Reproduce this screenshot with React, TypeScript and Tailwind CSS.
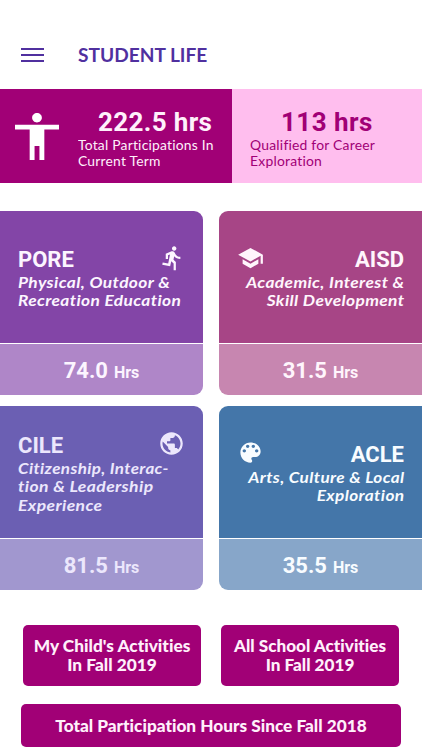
import { MdDirectionsRun, MdPublic, MdSchool } from "react-icons/md";
import type { ComponentType } from "react";

type Category = {
	code: string;
	lines: { text: string; scale: string }[];
	hours: string;
	Icon: ComponentType<{ className?: string }>;
	iconClass: string;
	topClass: string;
	bottomClass: string;
	textClass: string;
	right?: boolean;
};

function PaletteIcon({ className }: { className?: string }) {
	return (
		<svg viewBox="0 0 24 24" fill="currentColor" className={className}>
			<path d="M12 3c-4.97 0-9 4.03-9 9s4.03 9 9 9c.83 0 1.5-.67 1.5-1.5 0-.39-.15-.74-.39-1.01-.23-.26-.38-.61-.38-.99 0-.83.67-1.5 1.5-1.5H16c2.76 0 5-2.24 5-5 0-4.42-4.03-8-9-8zm-5.5 9c-.83 0-1.5-.67-1.5-1.5S5.67 9 6.5 9 8 9.67 8 10.5 7.33 12 6.5 12zm3-4C8.67 8 8 7.33 8 6.5S8.67 5 9.5 5s1.5.67 1.5 1.5S10.33 8 9.5 8zm5 0c-.83 0-1.5-.67-1.5-1.5S13.67 5 14.5 5s1.5.67 1.5 1.5S15.33 8 14.5 8zm3 4c-.83 0-1.5-.67-1.5-1.5S16.67 9 17.5 9s1.5.67 1.5 1.5-.67 1.5-1.5 1.5z" />
		</svg>
	);
}

const categories: Category[] = [
	{
		code: "PORE",
		lines: [
			{ text: "Physical, Outdoor &", scale: "scale-x-[1.118]" },
			{ text: "Recreation Education", scale: "scale-x-[1.115]" },
		],
		hours: "74.0",
		Icon: MdDirectionsRun,
		iconClass: "size-[27px] -mr-[1px] -translate-y-[2.5px]",
		topClass: "bg-[#8345a7] pt-[35px]",
		bottomClass: "bg-[#af86c8]",
		textClass: "text-[#fcf5ff]",
	},
	{
		code: "AISD",
		lines: [
			{ text: "Academic, Interest &", scale: "scale-x-[1.116]" },
			{ text: "Skill Development", scale: "scale-x-[1.117]" },
		],
		hours: "31.5",
		Icon: MdSchool,
		iconClass: "size-[27px] -translate-y-[2.5px]",
		topClass: "bg-[#a74586] pt-[35px]",
		bottomClass: "bg-[#c786b0]",
		textClass: "text-[#fff5fc]",
		right: true,
	},
	{
		code: "CILE",
		lines: [
			{ text: "Citizenship, Interac-", scale: "scale-x-[1.095]" },
			{ text: "tion & Leadership", scale: "scale-x-[1.13]" },
			{ text: "Experience", scale: "scale-x-[1.127]" },
		],
		hours: "81.5",
		Icon: MdPublic,
		iconClass: "size-[27px] -translate-y-[3px]",
		topClass: "bg-[#6b5fb3] pt-[26px]",
		bottomClass: "bg-[#a197cf]",
		textClass: "text-[#ece7fc]",
	},
	{
		code: "ACLE",
		lines: [
			{ text: "Arts, Culture & Local", scale: "scale-x-[1.106]" },
			{ text: "Exploration", scale: "scale-x-[1.11]" },
		],
		hours: "35.5",
		Icon: PaletteIcon,
		iconClass: "size-[27px] -translate-y-[3px]",
		topClass: "bg-[#4476a9] pt-[35px]",
		bottomClass: "bg-[#87a6c9]",
		textClass: "text-[#f8fcff]",
		right: true,
	},
];

function Header() {
	return (
		<header className="flex h-[89px] items-center pt-[21px] pl-[21px] text-[#50309f]">
			<div className="flex w-[57px] flex-col gap-[4px]">
				<span className="h-[2px] w-[23px] bg-[#50309f]" />
				<span className="h-[2px] w-[23px] bg-[#50309f]" />
				<span className="h-[2px] w-[23px] bg-[#50309f]" />
			</div>
			<h1 className="origin-left scale-x-[1.062] text-[18px] leading-[24px] font-bold whitespace-nowrap">STUDENT LIFE</h1>
		</header>
	);
}

function Summary() {
	return (
		<section className="flex h-[94px]">
			<div className="flex w-[232px] bg-[#a10076] pt-[18px] pl-[15px] text-[#fff0fb]">
				<svg viewBox="3 2 18 20" preserveAspectRatio="none" className="mt-[6px] h-[47px] w-[44px] fill-white">
					<path d="M12 2c1.1 0 2 .9 2 2s-.9 2-2 2-2-.9-2-2 .9-2 2-2zm9 7h-6v13h-2v-6h-2v6H9V9H3V7h18v2z" />
				</svg>
				<div className="ml-[19px] w-[140px]">
					<p className="pl-[20px] font-[Roboto] text-[26px] leading-[30px] font-bold tracking-[0.35px] whitespace-nowrap">
						222.5 hrs
					</p>
					<p className="mt-[1px] origin-left scale-x-[1.067] text-[13px] leading-[15.5px] tracking-[0.2px] whitespace-nowrap">
						Total Participations In
						<br />
						Current Term
					</p>
				</div>
			</div>
			<div className="flex-1 bg-[#ffbeee] pt-[18px] pl-[18px] text-[#a10076]">
				<p className="pl-[31px] font-[Roboto] text-[26px] leading-[30px] font-bold tracking-[0.45px] whitespace-nowrap">113 hrs</p>
				<p className="mt-[1px] origin-left scale-x-[1.07] text-[13px] leading-[15.5px] tracking-[0.2px] whitespace-nowrap">
					Qualified for Career
					<br />
					Exploration
				</p>
			</div>
		</section>
	);
}

function CategoryCard({ category }: { category: Category }) {
	const { Icon, right } = category;

	return (
		<article
			className={`flex h-[184px] flex-col gap-[1px] overflow-hidden ${category.textClass} ${
				right ? "rounded-l-[9px]" : "rounded-r-[9px]"
			}`}
		>
			<div className={`h-[132px] px-[18px] ${category.topClass}`}>
				<div className={`flex h-[28px] items-center justify-between ${right ? "flex-row-reverse" : ""}`}>
					<h2 className="font-[Roboto] text-[22px] leading-[28px] font-bold">{category.code}</h2>
					<Icon className={category.iconClass} />
				</div>
				<div
					className={`-mt-[1px] text-[15.5px] leading-[18.3px] font-bold tracking-[0.35px] italic ${
						right ? "-mr-[0.5px] text-right" : ""
					}`}
				>
					{category.lines.map((line) => (
						<p key={line.text} className={`whitespace-nowrap ${right ? "origin-right" : "origin-left"} ${line.scale}`}>
							{line.text}
						</p>
					))}
				</div>
			</div>
			<div className={`flex flex-1 items-baseline justify-center gap-[6px] pt-[13px] font-[Roboto] font-bold ${category.bottomClass}`}>
				<span className="text-[22px] leading-[28px]">{category.hours}</span>
				<span className="text-[16px]">Hrs</span>
			</div>
		</article>
	);
}

export default function App() {
	return (
		<main className="h-[750px] w-[422px] overflow-hidden bg-white font-[Lato,sans-serif]">
			<Header />
			<Summary />
			{/* Cards */}
			<div className="mt-[28px] grid grid-cols-[203px_203px] gap-x-[16px] gap-y-[11px]">
				{categories.map((category) => (
					<CategoryCard key={category.code} category={category} />
				))}
			</div>
			{/* Actions */}
			<div className="mt-[35px] flex gap-[20px] pl-[23px] text-center text-[16px] leading-[18.5px] font-black whitespace-nowrap text-[#fff0fb] [font-variant-ligatures:none]">
				<button className="h-[61px] w-[178px] rounded-[5px] bg-[#a10076]">
					<span className="block scale-x-[1.08]">
						My Child's Activities
						<br />
						In Fall 2019
					</span>
				</button>
				<button className="h-[61px] w-[178px] rounded-[5px] bg-[#a10076]">
					<span className="block scale-x-[1.07]">
						All School Activities
						<br />
						In Fall 2019
					</span>
				</button>
			</div>
			<button className="mt-[18px] ml-[21px] h-[43px] w-[380px] rounded-[5px] bg-[#a10076] text-[16px] font-black whitespace-nowrap text-[#fff0fb] [font-variant-ligatures:none]">
				<span className="block scale-x-[1.077]">Total Participation Hours Since Fall 2018</span>
			</button>
		</main>
	);
}
